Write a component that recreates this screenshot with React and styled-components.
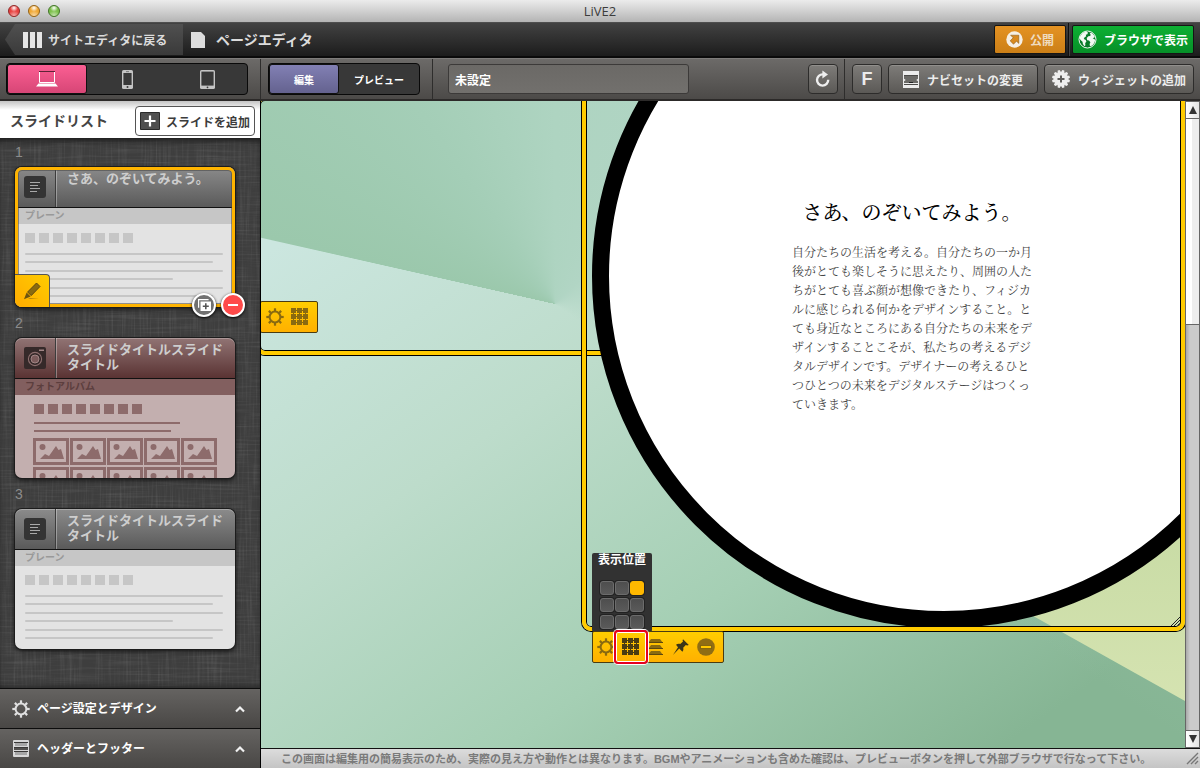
import { useState } from "react";
import styled, { createGlobalStyle, css } from "styled-components";

const GlobalStyle = createGlobalStyle`
  * {
    box-sizing: border-box;
  }
  body {
    margin: 0;
    background: #434343;
  }
  body, button, input {
    font-family: "Liberation Sans", "Noto Sans CJK JP", sans-serif;
  }
  button {
    margin: 0;
    padding: 0;
    border: 0;
    background: none;
    color: inherit;
    cursor: pointer;
  }
  svg {
    display: block;
    flex: none;
  }
  h1, h2, h3, p, ol {
    margin: 0;
    padding: 0;
  }
`;

const TEETH = [0, 45, 90, 135, 180, 225, 270, 315];

const GearIcon = ({ size = 18, color }) => (
  <svg width={size} height={size} viewBox="0 0 18 18">
    <circle cx="9" cy="9" r="5.4" fill="none" stroke={color} strokeWidth="2" />
    {TEETH.map((deg) => (
      <rect
        key={deg}
        x="7.9"
        y="0.3"
        width="2.2"
        height="3"
        fill={color}
        transform={`rotate(${deg} 9 9)`}
      />
    ))}
  </svg>
);

const GridIcon = ({ color }) => (
  <svg width="18" height="18" viewBox="0 0 18 18" fill={color}>
    {[0, 6, 12].map((y) =>
      [0, 6, 12].map((x) => (
        <rect key={`${x}-${y}`} x={x} y={y} width="5" height="5" />
      ))
    )}
    <path d="M3 2h12v1H3zM3 8h12v1H3zM3 14h12v1H3zM2 3h1v12H2zM8 3h1v12H8zM14 3h1v12h-1z" />
  </svg>
);

const ColumnsIcon = () => (
  <svg width="20" height="16" viewBox="0 0 20 16" fill="#e6e6e6">
    <path d="M0 0h5v16H0zM7 0h5v16H7zM14 0h5v16h-5z" />
  </svg>
);

const PageIcon = () => (
  <svg width="14" height="16" viewBox="0 0 14 16">
    <path d="M0 0h10l4 4v12H0z" fill="#dcdcdc" />
  </svg>
);

const ExportIcon = () => (
  <svg width="17" height="17" viewBox="0 0 17 17">
    <circle cx="8.5" cy="8.5" r="8.2" fill="#f6efe4" />
    <path
      d="M4.6 4.2h8.2v8.200l-2.300-2.200-3 3-3.400-3.400 3-3z"
      fill="#d98a20"
      stroke="#7a4f12"
      strokeWidth="0.5"
    />
  </svg>
);

const GlobeIcon = () => (
  <svg width="19" height="19" viewBox="0 0 19 19">
    <circle cx="9.5" cy="9.5" r="8.5" fill="#067a27" stroke="#f2f8f3" strokeWidth="1" />
    <path
      d="M2 6.500 4.500 3 8 1.600l2 1-.6 1.600-1.600.6.4 1.500-1.800 1.200-.6 1.600 2 .8.6 1.800-1.200 1.400.2 2.200-1 .9-1.500-2.200-.4-2.300-2-1.600-1-2zM11.500 2.600l2.700.6 2.600 3-.5 1.500-1.600.2 1.500 1.400 1 .1-.6 3.200-2 2.600-2.600 1.400-.4-2.600.8-1.700-1.400-1.700-1.800-.4-.5-2.200 1.600-1.700 1.800-.2.600-1.200z"
      fill="#f2f8f3"
    />
  </svg>
);

const LaptopIcon = () => (
  <svg width="22" height="16" viewBox="0 0 22 16">
    <path d="M3.5 0.5h15v11h-15z" fill="none" stroke="#fff" />
    <path d="M3 0h16v1H3z" fill="#5e2436" />
    <path d="M2.5 12.5h17l2.5 3H0z" fill="#fff" />
  </svg>
);

const PhoneIcon = () => (
  <svg width="11" height="19" viewBox="0 0 11 19">
    <rect width="11" height="19" rx="1.6" fill="#c4c4c4" />
    <path d="M1.4 3h8.2v12H1.4z" fill="#383838" />
    <path d="M4 1.4h3v.7H4z" fill="#555" />
    <circle cx="5.5" cy="17" r="1" fill="#383838" />
  </svg>
);

const TabletIcon = () => (
  <svg width="15" height="19" viewBox="0 0 15 19">
    <rect width="15" height="19" rx="1.6" fill="#c4c4c4" />
    <path d="M1.4 1.6h12.2v14H1.4z" fill="#383838" />
    <circle cx="7.5" cy="17.3" r="0.9" fill="#383838" />
  </svg>
);

const ReloadIcon = () => (
  <svg width="16" height="18" viewBox="0 0 16 18">
    <path d="M13.2 9.8A5.6 5.6 0 1 1 8 4.4" fill="none" stroke="#eee" strokeWidth="2.4" />
    <path d="M7.4 0.6 13 4.6 7.4 8.6z" fill="#eee" />
  </svg>
);

const NavIcon = () => (
  <svg width="16" height="17" viewBox="0 0 16 17">
    <path d="M0 0h16v17H0z" fill="#ececec" />
    <path d="M1 4h14v1H1zM1 13h14v1H1z" fill="#4b4a48" />
    <path d="M1 5h14v7H1z" fill="#6b6a67" />
    <path d="m0 7 2.800 2L0 11zM16 7l-2.800 2 2.800 2z" fill="#ececec" />
    <path d="M6 11h4v1H6z" fill="#222" />
  </svg>
);

const WidgetIcon = () => (
  <svg width="18" height="18" viewBox="0 0 18 18">
    <circle cx="9" cy="9" r="6.8" fill="#eee" />
    {[0, 30, 60, 90, 120, 150].map((deg) => (
      <path
        key={deg}
        d="M8 0h2l1 3H7zM8 18h2l1-3H7z"
        fill="#eee"
        transform={`rotate(${deg + 15} 9 9)`}
      />
    ))}
    <path d="M8 5.500h2V8h2.500v2H10v2.500H8V10H5.500V8H8z" fill="#5e5d5b" />
  </svg>
);

const PlusBoxIcon = () => (
  <svg width="20" height="18" viewBox="0 0 20 18">
    <path d="M0.5 0.5h19v17H.5z" fill="#505050" stroke="#2b2b2b" />
    <path d="M8.9 3.5h2.2v4.4h4.4v2.2h-4.4v4.4H8.9v-4.4H4.5V7.9h4.4z" fill="#fff" />
  </svg>
);

const TextIcon = () => (
  <svg width="22" height="22" viewBox="0 0 22 22">
    <rect width="22" height="22" rx="3" fill="#343434" />
    <path d="M6 6h10v1H6zM6 9h8v1H6zM6 12h10v1H6zM6 15h7v1H6z" fill="#a9a9a9" />
  </svg>
);

const CameraIcon = () => (
  <svg width="22" height="22" viewBox="0 0 22 22">
    <rect width="22" height="22" rx="2" fill="#352929" />
    <circle cx="11" cy="12" r="6.6" fill="none" stroke="#8d6e6e" strokeWidth="1.1" />
    <circle cx="11" cy="12" r="4" fill="#7b5b5b" stroke="#a08585" />
    <path d="M15 2.5h5v1.5h-5z" fill="#a08585" />
  </svg>
);

const PencilIcon = () => (
  <svg width="19" height="18" viewBox="0 0 19 18">
    <path
      d="M13.500 1 17 4.500 8.200 13.600 4.600 10z"
      fill="#8a6a10"
      stroke="#5d480e"
      strokeWidth="1"
    />
    <path d="M3.600 10.600 7.600 14.500 1 17.200zM7 16.400l9 .6H5z" fill="#6d5410" />
  </svg>
);

const DuplicateIcon = () => (
  <svg width="13" height="12" viewBox="0 0 13 12">
    <path d="M.6 8.8V.6h10" fill="none" stroke="#fff" strokeWidth="1.2" />
    <path d="M2.5 2.5H13V12H2.5z" fill="#fff" />
    <path d="M7 4.2h1.6v2.2h2.2V8H8.6v2.2H7V8H4.8V6.4H7z" fill="#555" />
  </svg>
);

const PhotoIcon = () => (
  <svg width="36" height="27" viewBox="0 0 36 27">
    <path d="M1.500 1.500h33v24h-33z" fill="#c3afaf" stroke="#8d6b6b" strokeWidth="3" />
    <circle cx="9.500" cy="9" r="3" fill="#8d6b6b" />
    <path d="m7 21 5-5 4 2 7-10 2.500 4 2.500-1 3 10z" fill="#8d6b6b" />
  </svg>
);

const HeaderFooterIcon = () => (
  <svg width="18" height="17" viewBox="-1 0 18 17">
    <path d="M.5.5h15v16H.5z" fill="#53514f" stroke="#d8d8d8" />
    <path d="M1 1h14v6H1zM1 10h14v6H1z" fill="#d8d8d8" />
    <path d="M2 3h12v3H2zM2 12h12v3H2z" fill="#a6a6a6" />
    <path d="M1 2h14v1H1zM1 7h14v1H1zM1 11h14v1H1z" fill="#3a3938" />
  </svg>
);

const ChevronIcon = () => (
  <svg width="10" height="8" viewBox="0 0 10 8">
    <path d="m1 6.5 4-4 4 4" fill="none" stroke="#f2f2f2" strokeWidth="2.2" />
  </svg>
);

const LayersIcon = () => (
  <svg width="17" height="18" viewBox="0 0 17 18" fill="#8a6a10">
    <path d="M4 1h9l3 4H1zM4 7h9l3 4H1zM4 13h9l3 4H1z" />
    <path d="M1 4h15v1H1zM1 10h15v1H1zM1 16h15v1H1z" fill="#5d480e" />
  </svg>
);

const PinIcon = () => (
  <svg width="18" height="18" viewBox="0 0 18 18" fill="#3b3518">
    <path d="M11 1.2 16.8 7l-1.6.4-1.4-.5-2.6 2.8c.4 1.5.2 2.9-.8 4L7.2 10.5 1 17l5-7.8L4 6.8c1.200-1 2.700-1.200 4.200-.8L11 3.600l-.4-1z" />
  </svg>
);

const MinusIcon = () => (
  <svg width="18" height="18" viewBox="0 0 18 18">
    <circle cx="9" cy="9" r="8.800" fill="#8f6d14" />
    <path d="M3.500 7.500h11v3h-11z" fill="#ffc800" stroke="#5b470f" strokeWidth=".6" />
  </svg>
);

const LimeField = () => (
  <Art viewBox="0 0 924 647" preserveAspectRatio="xMinYMin slice" aria-hidden="true">
    <defs>
      <linearGradient id="lime" x1="0" y1="0" x2="0" y2="1">
        <stop offset="0" stopColor="#bfd69c" />
        <stop offset="1" stopColor="#d5e3b1" />
      </linearGradient>
    </defs>
    <path d="M600 420 774 516 924 600V300H600z" fill="url(#lime)" />
  </Art>
);

const LinenTexture = () => (
  <Texture aria-hidden="true">
    <filter id="linen-h">
      <feTurbulence type="fractalNoise" baseFrequency="0.02 0.5" numOctaves="2" seed="3" />
      <feColorMatrix values="0 0 0 0 0.6  0 0 0 0 0.6  0 0 0 0 0.6  1.6 0 0 0 -0.72" />
    </filter>
    <filter id="linen-v">
      <feTurbulence type="fractalNoise" baseFrequency="0.5 0.02" numOctaves="2" seed="8" />
      <feColorMatrix values="0 0 0 0 0.6  0 0 0 0 0.6  0 0 0 0 0.6  1.6 0 0 0 -0.72" />
    </filter>
    <rect width="100%" height="100%" filter="url(#linen-h)" opacity="0.15" />
    <rect width="100%" height="100%" filter="url(#linen-v)" opacity="0.15" />
  </Texture>
);

const slides = [
  { id: 1, title: "さあ、のぞいてみよう。", kind: "プレーン", selected: true },
  { id: 2, title: "スライドタイトルスライドタイトル", kind: "フォトアルバム", album: true },
  { id: 3, title: "スライドタイトルスライドタイトル", kind: "プレーン" },
];

const plainLines = ["long", "mid", "long", "short", "long", "mid"];
const blocks = [1, 2, 3, 4, 5, 6, 7, 8];
const photos = [1, 2, 3, 4, 5, 6, 7, 8, 9, 10];

const devices = [
  { name: "パソコン", Icon: LaptopIcon },
  { name: "スマートフォン", Icon: PhoneIcon },
  { name: "タブレット", Icon: TabletIcon },
];

const SlideCard = ({ slide }) => (
  <SlideItem>
    <SlideNumber>{slide.id}</SlideNumber>
    <Card>
      <CardHead $album={slide.album}>
        <CardIcon>{slide.album ? <CameraIcon /> : <TextIcon />}</CardIcon>
        <CardTitle>{slide.title}</CardTitle>
      </CardHead>
      <CardKind $album={slide.album}>{slide.kind}</CardKind>
      <CardBody $album={slide.album}>
        <Blocks>
          {blocks.map((n) => (
            <Block key={n} $album={slide.album} />
          ))}
        </Blocks>
        {slide.album ? (
          <>
            <AlbumLine $width="80%" />
            <AlbumLine $width="75%" />
            <Photos>
              {photos.map((n) => (
                <PhotoIcon key={n} />
              ))}
            </Photos>
          </>
        ) : (
          <Lines>
            {plainLines.map((size, i) => (
              <Line key={i} $size={size} />
            ))}
          </Lines>
        )}
      </CardBody>
      {slide.selected && (
        <>
          <SelectedFrame />
          <EditButton aria-label="編集">
            <PencilIcon />
          </EditButton>
          <CardActions>
            <RoundButton aria-label="複製">
              <DuplicateIcon />
            </RoundButton>
            <RoundButton $danger aria-label="削除">
              <MinusBar />
            </RoundButton>
          </CardActions>
        </>
      )}
    </Card>
  </SlideItem>
);

const App = () => {
  const [device, setDevice] = useState(0);
  const [mode, setMode] = useState("edit");
  const [pageTitle, setPageTitle] = useState("未設定");
  const [position, setPosition] = useState(2);

  return (
    <Window>
      <GlobalStyle />
      <TitleBar>
        <Lights>
          <Light $color="#e8413f" $edge="#8f2c2b" />
          <Light $color="#f0a835" $edge="#94641b" />
          <Light $color="#7cc04b" $edge="#43752a" />
        </Lights>
        <WindowTitle>LiVE2</WindowTitle>
      </TitleBar>

      <AppHeader>
        <BackButton>
          <ColumnsIcon />
          サイトエディタに戻る
        </BackButton>
        <PageHeading>
          <PageIcon />
          ページエディタ
        </PageHeading>
        <PublishButton>
          <ExportIcon />
          公開
        </PublishButton>
        <HeaderDivider />
        <BrowserButton>
          <GlobeIcon />
          ブラウザで表示
        </BrowserButton>
      </AppHeader>

      <Toolbar>
        <DeviceArea>
          <Switch>
            {devices.map(({ name, Icon }, i) => (
              <DeviceButton
                key={name}
                aria-label={name}
                $active={device === i}
                onClick={() => setDevice(i)}
              >
                <Icon />
              </DeviceButton>
            ))}
          </Switch>
        </DeviceArea>
        <ModeArea>
          <Switch>
            <ModeButton $width={70} $active={mode === "edit"} onClick={() => setMode("edit")}>
              編集
            </ModeButton>
            <ModeButton
              $width={80}
              $active={mode === "preview"}
              onClick={() => setMode("preview")}
            >
              プレビュー
            </ModeButton>
          </Switch>
        </ModeArea>
        <TitleArea>
          <TitleInput
            aria-label="ページタイトル"
            value={pageTitle}
            onChange={(e) => setPageTitle(e.target.value)}
          />
          <ToolButton $width={30} aria-label="再読み込み">
            <ReloadIcon />
          </ToolButton>
        </TitleArea>
        <ToolArea>
          <ToolButton $width={30} $letter>
            F
          </ToolButton>
          <ToolButton $width={150}>
            <NavIcon />
            ナビセットの変更
          </ToolButton>
          <ToolButton $width={150}>
            <WidgetIcon />
            ウィジェットの追加
          </ToolButton>
        </ToolArea>
      </Toolbar>

      <Body>
        <Sidebar>
          <ListHeader>
            <ListTitle>スライドリスト</ListTitle>
            <AddSlideButton>
              <PlusBoxIcon />
              スライドを追加
            </AddSlideButton>
          </ListHeader>
          <SlideArea>
            <LinenTexture />
            <SlideList>
              {slides.map((slide) => (
                <SlideCard key={slide.id} slide={slide} />
              ))}
            </SlideList>
          </SlideArea>
          <PanelButton>
            <GearIcon color="#e0e0e0" />
            <PanelName>ページ設定とデザイン</PanelName>
            <ChevronIcon />
          </PanelButton>
          <PanelButton>
            <HeaderFooterIcon />
            <PanelName>ヘッダーとフッター</PanelName>
            <ChevronIcon />
          </PanelButton>
        </Sidebar>

        <Main>
          <Stage>
            <Canvas>
              <LimeField />
              <BackFrame />
              <BackTools>
                <IconButton aria-label="設定">
                  <GearIcon color="#8a6a10" />
                </IconButton>
                <IconButton aria-label="表示位置">
                  <GridIcon color="#8a6a10" />
                </IconButton>
              </BackTools>

              <FrontFrame>
                <FrameClip>
                  <Circle />
                  <Article>
                    <ArticleTitle>さあ、のぞいてみよう。</ArticleTitle>
                    <ArticleText>
                      自分たちの生活を考える。自分たちの一か月後がとても楽しそうに思えたり、周囲の人たちがとても喜ぶ顔が想像できたり、フィジカルに感じられる何かをデザインすること。とても身近なところにある自分たちの未来をデザインすることこそが、私たちの考えるデジタルデザインです。デザイナーの考えるひとつひとつの未来をデジタルステージはつくっていきます。
                    </ArticleText>
                  </Article>
                  <ResizeMark width="9" height="9" viewBox="0 0 9 9">
                    <path d="m0 9 9-9M3 9l6-6M6 9l3-3" stroke="#222" />
                  </ResizeMark>
                </FrameClip>
              </FrontFrame>

              <PositionPopup>
                <PopupTitle>表示位置</PopupTitle>
                <PositionGrid>
                  {[0, 1, 2, 3, 4, 5, 6, 7, 8].map((n) => (
                    <PositionCell
                      key={n}
                      aria-label={`位置${n + 1}`}
                      $active={position === n}
                      onClick={() => setPosition(n)}
                    />
                  ))}
                </PositionGrid>
              </PositionPopup>
              <FrontTools>
                <IconButton aria-label="設定">
                  <GearIcon color="#8a6a10" />
                </IconButton>
                <IconButton $marked aria-label="表示位置">
                  <GridIcon color="#4a3c12" />
                </IconButton>
                <IconButton aria-label="重ね順">
                  <LayersIcon />
                </IconButton>
                <IconButton aria-label="固定">
                  <PinIcon />
                </IconButton>
                <IconButton aria-label="削除">
                  <MinusIcon />
                </IconButton>
              </FrontTools>
            </Canvas>
            <ScrollBar>
              <ScrollArrow aria-label="上へ">
                <svg width="8" height="8" viewBox="0 0 8 8">
                  <path d="m4 0 4 8H0z" fill="#333" />
                </svg>
              </ScrollArrow>
              <ScrollThumb />
              <ScrollTrack />
              <ScrollArrow aria-label="下へ">
                <svg width="8" height="8" viewBox="0 0 8 8">
                  <path d="m4 8 4-8H0z" fill="#333" />
                </svg>
              </ScrollArrow>
            </ScrollBar>
          </Stage>
          <StatusBar>
            <StatusText>
              この画面は編集用の簡易表示のため、実際の見え方や動作とは異なります。BGMやアニメーションも含めた確認は、プレビューボタンを押して外部ブラウザで行なって下さい。
            </StatusText>
            <svg width="13" height="13" viewBox="0 0 13 13">
              <path d="M1 12 12 1M5 12l7-7M9 12l3-3" stroke="#777" strokeWidth="1.4" />
            </svg>
          </StatusBar>
        </Main>
      </Body>
    </Window>
  );
};

const Window = styled.div`
  display: flex;
  flex-direction: column;
  height: 100vh;
  min-height: 720px;
  overflow: hidden;
`;

const TitleBar = styled.div`
  position: relative;
  display: flex;
  align-items: center;
  justify-content: center;
  height: 23px;
  background: linear-gradient(#ececec, #b4b4b4);
  border-bottom: 1px solid #4e4e4e;
`;
const Lights = styled.div`
  position: absolute;
  left: 8px;
  top: 5px;
  display: flex;
  gap: 8px;
`;
const Light = styled.span`
  width: 12px;
  height: 12px;
  border-radius: 50%;
  border: 1px solid ${(p) => p.$edge};
  background: radial-gradient(circle at 50% 20%, #fff 0, transparent 40%),
    radial-gradient(circle at 50% 100%, #fff9 0, transparent 50%), ${(p) => p.$color};
`;
const WindowTitle = styled.h1`
  font: 400 13px/20px "Open Sans", sans-serif;
  color: #3c3c3c;
`;

const AppHeader = styled.header`
  display: flex;
  align-items: center;
  height: 35px;
  padding-left: 5px;
  padding-right: 6px;
  background: linear-gradient(#424242, #1c1c1c);
  border-bottom: 2px solid #0a0a0a;
  color: #dcdcdc;
`;
const BackButton = styled.button`
  display: flex;
  align-items: center;
  gap: 5px;
  height: 31px;
  width: 178px;
  padding-left: 18px;
  background: linear-gradient(#505050, #3a3a3a);
  clip-path: polygon(0 50%, 10px 0, 100% 0, 100% 100%, 10px 100%);
  font-size: 12px;
  font-weight: 700;
  white-space: nowrap;
`;
const PageHeading = styled.h2`
  display: flex;
  align-items: center;
  gap: 11px;
  flex: 1;
  padding-left: 8px;
  font-size: 14px;
  line-height: 20px;
`;
const actionButton = css`
  display: flex;
  align-items: center;
  justify-content: center;
  height: 29px;
  border: 1px solid #151515;
  border-radius: 2px;
  font-size: 12px;
  font-weight: 700;
  white-space: nowrap;
`;
const PublishButton = styled.button`
  ${actionButton}
  gap: 7px;
  width: 72px;
  background: linear-gradient(#e59323, #cb7f17);
  color: #efdcc0;
`;
const BrowserButton = styled.button`
  ${actionButton}
  gap: 7px;
  width: 122px;
  background: linear-gradient(#0db033, #068f28);
  color: #fff;
`;
const HeaderDivider = styled.span`
  width: 2px;
  height: 33px;
  margin: 0 2px;
  background: #101010;
  border-right: 1px solid #444;
`;

const Toolbar = styled.div`
  display: flex;
  height: 43px;
  background: linear-gradient(#6c6a68, #4c4a48);
  border-top: 1px solid #7e7c7a;
  border-bottom: 2px solid #2c2a29;
`;
const toolGroup = css`
  display: flex;
  align-items: center;
  border-right: 1px solid #2e2d2c;
`;
const DeviceArea = styled.div`
  ${toolGroup}
  width: 261px;
  padding-left: 6px;
`;
const ModeArea = styled.div`
  ${toolGroup}
  width: 172px;
  padding-left: 7px;
`;
const TitleArea = styled.div`
  ${toolGroup}
  flex: 1;
  justify-content: space-between;
  padding: 0 6px 0 15px;
`;
const ToolArea = styled.div`
  display: flex;
  align-items: center;
  gap: 6px;
  padding: 0 6px 0 7px;
`;
const Switch = styled.div`
  display: flex;
  height: 32px;
  background: #383838;
  border: 1px solid #090909;
  border-radius: 4px;
`;
const switchButton = css`
  display: flex;
  align-items: center;
  justify-content: center;
  border: 1px solid transparent;
  border-radius: 3px;
`;
const DeviceButton = styled.button`
  ${switchButton}
  width: 80px;
  ${(p) =>
    p.$active &&
    css`
      background: linear-gradient(#fb5f93, #d74676);
      border-color: #111;
    `}
`;
const ModeButton = styled.button`
  ${switchButton}
  width: ${(p) => p.$width}px;
  font-size: 10px;
  font-weight: 700;
  color: #fff;
  ${(p) =>
    p.$active &&
    css`
      background: linear-gradient(#8280b4, #64628f);
      border-color: #111;
    `}
`;
const TitleInput = styled.input`
  flex: 0 1 241px;
  min-width: 80px;
  height: 30px;
  padding: 0 6px;
  background: linear-gradient(#6b6966, #72706d);
  border: 1px solid #3c3a39;
  border-radius: 3px;
  color: #fff;
  font-size: 12px;
  font-weight: 700;
`;
const ToolButton = styled.button`
  display: flex;
  align-items: center;
  justify-content: center;
  gap: 8px;
  width: ${(p) => p.$width}px;
  height: 30px;
  background: linear-gradient(#7e7c79, #5b5956);
  border: 1px solid #2d2c2b;
  border-radius: 4px;
  box-shadow: inset 0 1px 0 #918f8c;
  color: #ececec;
  font-size: ${(p) => (p.$letter ? 18 : 12)}px;
  font-weight: 700;
  white-space: nowrap;
`;

const Body = styled.div`
  display: flex;
  flex: 1;
  min-height: 0;
`;

const Sidebar = styled.aside`
  display: flex;
  flex-direction: column;
  width: 261px;
  flex: none;
  border-right: 1px solid #000;
`;
const ListHeader = styled.div`
  display: flex;
  align-items: center;
  justify-content: space-between;
  height: 37px;
  padding: 3px 5px 0 10px;
  background: linear-gradient(#c4c4c4, #fff 9px);
`;
const ListTitle = styled.h3`
  font-size: 14px;
  line-height: 20px;
  color: #444;
`;
const AddSlideButton = styled.button`
  display: flex;
  align-items: center;
  gap: 6px;
  height: 30px;
  padding: 0 4px;
  background: #fff;
  border: 1px solid #555;
  border-radius: 4px;
  color: #3c3c3c;
  font-size: 12px;
  font-weight: 700;
  white-space: nowrap;
`;
const SlideArea = styled.div`
  position: relative;
  flex: 1;
  overflow: hidden;
  background: #3e3e3e;
`;
const Texture = styled.svg`
  position: absolute;
  inset: 0;
  width: 100%;
  height: 100%;
`;
const SlideList = styled.ol`
  position: relative;
  display: flex;
  flex-direction: column;
  gap: 2px;
  height: 100%;
  padding: 0 25px 0 15px;
  list-style: none;
  box-shadow: inset 0 6px 6px -3px #1c1c1c, inset 0 -5px 5px -3px #2a2a2a;
`;
const SlideItem = styled.li``;
const SlideNumber = styled.div`
  height: 29px;
  font-size: 14px;
  line-height: 29px;
  color: #8c8c8c;
`;
const Card = styled.div`
  position: relative;
  height: 140px;
  border-radius: 7px;
  box-shadow: 0 0 0 1px #1c1c1c, 0 2px 5px #111;
`;
const CardHead = styled.div`
  display: flex;
  height: 41px;
  border-radius: 7px 7px 0 0;
  border-bottom: 1px solid #111;
  background: ${(p) =>
    p.$album
      ? "linear-gradient(#917474, #5a3333)"
      : "linear-gradient(#8b8b8b, #5a5a5a)"};
  box-shadow: inset 0 1px 0 #ffffff44;
`;
const CardIcon = styled.div`
  display: flex;
  align-items: center;
  justify-content: center;
  width: 41px;
  border-right: 1px solid #3c3c3c;
  box-shadow: 1px 0 0 #ffffff55;
`;
const CardTitle = styled.h3`
  flex: 1;
  padding: 4px 0 0 11px;
  font-size: 13px;
  line-height: 15px;
  color: #cecece;
`;
const CardKind = styled.div`
  height: 16px;
  padding-left: 10px;
  font-size: 10px;
  line-height: 16px;
  font-weight: 700;
  color: ${(p) => (p.$album ? "#5c3e3e" : "#999")};
  background: ${(p) => (p.$album ? "#825f5f" : "#c6c6c6")};
`;
const CardBody = styled.div`
  height: 83px;
  overflow: hidden;
  padding: ${(p) => (p.$album ? "9px 18px 0 19px" : "9px 10px 0")};
  border-radius: 0 0 7px 7px;
  background: ${(p) => (p.$album ? "#c3afaf" : "#e3e3e3")};
`;
const Blocks = styled.div`
  display: flex;
  gap: 4px;
`;
const Block = styled.span`
  width: 10px;
  height: 10px;
  background: ${(p) => (p.$album ? "#8d6b6b" : "#c6c6c6")};
`;
const Lines = styled.div`
  display: flex;
  flex-direction: column;
  gap: 6px;
  padding-top: 10px;
`;
const lineWidths = { long: "99%", mid: "94%", short: "74%" };
const Line = styled.span`
  width: ${(p) => lineWidths[p.$size]};
  height: 2px;
  border-radius: 1px;
  background: #c6c6c6;
  &:nth-child(2n + 3) {
    margin-top: 1px;
  }
`;
const AlbumLine = styled.div`
  width: ${(p) => p.$width};
  height: 2px;
  margin-top: 8px;
  background: #8d6b6b;
  & + & {
    margin-top: 6px;
  }
`;
const Photos = styled.div`
  display: grid;
  grid-template-columns: repeat(5, 36px);
  gap: 2px 1px;
  margin: 6px 0 0 -1px;
`;
const SelectedFrame = styled.div`
  position: absolute;
  inset: 0;
  border: 3px solid #ffb400;
  border-radius: 7px;
  box-shadow: inset 0 0 0 1px #4448;
  pointer-events: none;
`;
const EditButton = styled.button`
  position: absolute;
  left: 0;
  bottom: 0;
  display: flex;
  align-items: center;
  justify-content: center;
  width: 35px;
  height: 33px;
  border-radius: 0 4px 0 7px;
  border-top: 1px solid #555;
  border-right: 1px solid #555;
  background: linear-gradient(45deg, #ffab00, #ffcc00);
`;
const CardActions = styled.div`
  position: absolute;
  right: -10px;
  bottom: -10px;
  display: flex;
  gap: 5px;
`;
const RoundButton = styled.button`
  display: flex;
  align-items: center;
  justify-content: center;
  width: 24px;
  height: 24px;
  border: 2px solid #fff;
  border-radius: 50%;
  background: ${(p) => (p.$danger ? "#ff4a4a" : "#707070")};
  box-shadow: 0 1px 3px #000;
`;
const MinusBar = styled.span`
  width: 10px;
  height: 2px;
  background: #fff;
`;
const PanelButton = styled.button`
  display: flex;
  align-items: center;
  gap: 7px;
  height: 40px;
  padding: 0 15px 0 12px;
  border-top: 1px solid #0c0c0c;
  background: linear-gradient(#656361, #494745);
  color: #fff;
  text-align: left;
`;
const PanelName = styled.span`
  flex: 1;
  font-size: 12px;
  line-height: 16px;
  font-weight: 700;
`;

const Main = styled.main`
  display: flex;
  flex-direction: column;
  flex: 1;
  min-width: 0;
`;
const Stage = styled.div`
  display: flex;
  flex: 1;
  min-height: 0;
`;
const Canvas = styled.div`
  position: relative;
  flex: 1;
  overflow: hidden;
  background: conic-gradient(
      at 294px 203px,
      #aed4c1 0deg,
      #b1d5c4 45deg,
      #bddcca00 125deg,
      #bddcca00 282.6deg,
      #9bc8ac 282.8deg,
      #a4ceb7 325deg,
      #aed4c1 360deg
    ),
    linear-gradient(145deg, #cbe6df 12%, #bddccb 38%, #a5cfb4 63%, #86b594 90%);
`;
const Art = styled.svg`
  position: absolute;
  inset: 0;
  width: 100%;
  height: 100%;
`;
const frame = css`
  position: absolute;
  border: 4px solid #ffcb00;
  border-radius: 9px;
  box-shadow: 0 0 0 1px #000, inset 0 0 0 1px #000;
`;
const BackFrame = styled.div`
  ${frame}
  left: -5px;
  right: -5px;
  top: -5px;
  height: 259px;
`;
const FrontFrame = styled.div`
  ${frame}
  left: 321px;
  right: 0;
  top: -20px;
  height: 550px;
  padding: 1px;
`;
const FrameClip = styled.div`
  position: relative;
  height: 100%;
  overflow: hidden;
  border-radius: 4px;
`;
const Circle = styled.div`
  position: absolute;
  left: 5px;
  top: -162px;
  width: 704px;
  height: 704px;
  border: 17px solid #000;
  border-radius: 50%;
  background: #fff;
`;
const Article = styled.article`
  position: relative;
  width: 240px;
  margin-left: 205px;
  padding-top: 115px;
  font-family: "Liberation Serif", "Noto Serif CJK JP", "Noto Sans CJK JP", serif;
`;
const ArticleTitle = styled.h2`
  margin-bottom: 19px;
  font-size: 20px;
  line-height: 24px;
  font-weight: 500;
  text-align: center;
  white-space: nowrap;
  color: #000;
`;
const ArticleText = styled.p`
  font-size: 12px;
  line-height: 19px;
  line-break: anywhere;
  color: #444;
`;
const ResizeMark = styled.svg`
  position: absolute;
  right: 0;
  bottom: 0;
`;
const floatingTools = css`
  position: absolute;
  display: flex;
  align-items: center;
  height: 32px;
  background: linear-gradient(#ffcd00, #ffb000);
  border: 1px solid #4a3c12;
  border-radius: 2px;
`;
const BackTools = styled.div`
  ${floatingTools}
  left: -1px;
  top: 200px;
  gap: 7px;
  padding: 0 8px 0 5px;
`;
const FrontTools = styled.div`
  ${floatingTools}
  left: 331px;
  top: 530px;
  gap: 7px;
  padding: 0 8px 0 4px;
`;
const IconButton = styled.button`
  position: relative;
  width: 18px;
  height: 18px;
  ${(p) =>
    p.$marked &&
    css`
      z-index: 1;
      &::before {
        content: "";
        position: absolute;
        inset: -8px;
        border: 2px solid #e60020;
        border-radius: 4px;
        background: linear-gradient(#ffcd00, #ffb000);
        box-shadow: 0 0 0 1px #fff, inset 0 0 0 1px #fff;
      }
      svg {
        position: relative;
      }
    `}
`;
const PositionPopup = styled.div`
  position: absolute;
  left: 331px;
  top: 452px;
  width: 60px;
  height: 79px;
  background: #323232;
  border-radius: 2px;
`;
const PopupTitle = styled.h3`
  font-size: 12px;
  line-height: 14px;
  text-align: center;
  white-space: nowrap;
  color: #fff;
`;
const PositionGrid = styled.div`
  display: grid;
  grid-template-columns: repeat(3, 14px);
  justify-content: center;
  gap: 3px 1px;
  padding-top: 14px;
`;
const PositionCell = styled.button`
  height: 14px;
  border: 1px solid ${(p) => (p.$active ? "#ffb800" : "#6c6c6c")};
  border-radius: 3px;
  background: ${(p) => (p.$active ? "#ffb800" : "linear-gradient(#4e4e4e, #5a5a5a)")};
  box-shadow: 0 0 0 1px #222;
`;

const ScrollBar = styled.div`
  display: flex;
  flex-direction: column;
  width: 15px;
  border-left: 1px solid #666;
  border-right: 1px solid #666;
  background: #c8c8c8;
`;
const ScrollArrow = styled.button`
  display: flex;
  align-items: center;
  justify-content: center;
  height: 18px;
  border: 1px solid #666;
  border-width: 1px 0;
  background: linear-gradient(90deg, #fff, #e4e4e4);
`;
const ScrollThumb = styled.div`
  flex: 205;
  background: linear-gradient(90deg, #fff 45%, #ededed 50%);
  border-bottom: 1px solid #666;
`;
const ScrollTrack = styled.div`
  flex: 406;
  background: linear-gradient(90deg, #a9a9a9, #cbcbcb 4px);
`;
const StatusBar = styled.footer`
  display: flex;
  align-items: center;
  justify-content: space-between;
  height: 20px;
  padding: 0 1px 0 20px;
  border-top: 1px solid #111;
  background: linear-gradient(#dcdcdc, #c4c4c4);
`;
const StatusText = styled.p`
  overflow: hidden;
  font-size: 11px;
  line-height: 18px;
  font-weight: 700;
  white-space: nowrap;
  color: #7a7a7a;
`;

export default App;
